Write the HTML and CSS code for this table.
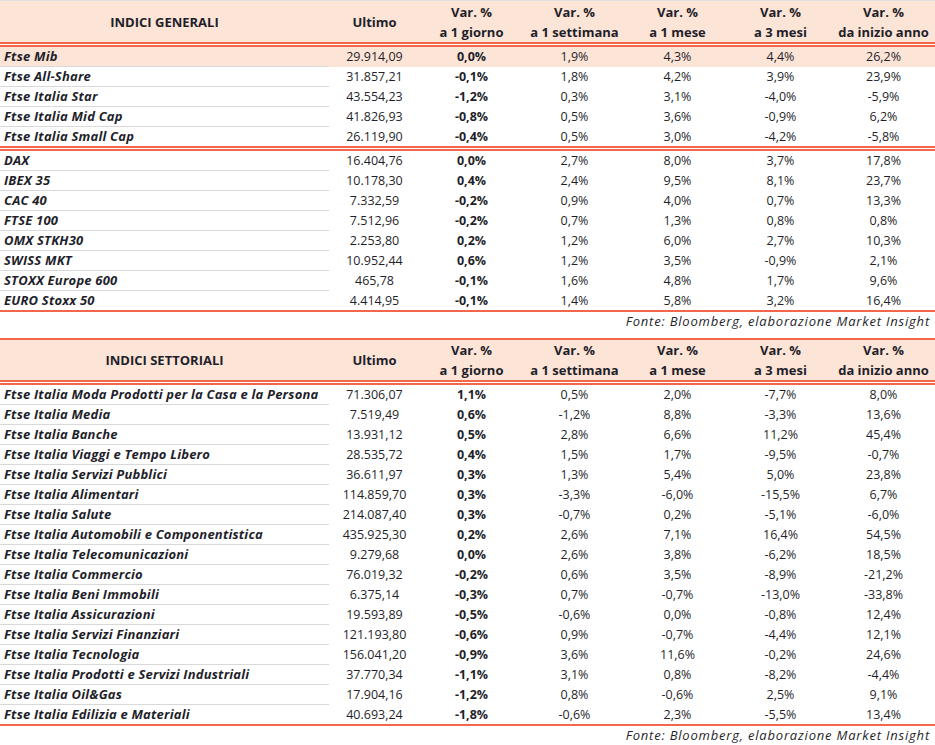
FILE: index.html
```html
<!DOCTYPE html>
<html lang="it">
<head>
<meta charset="utf-8">
<title>Indici</title>
<link rel="stylesheet" href="styles.css">
</head>
<body>
<div class="sheet">
  <div class="grid head head1">
    <div class="hname">INDICI GENERALI</div>
    <div>Ultimo</div>
    <div>Var. %<br>a 1 giorno</div>
    <div>Var. %<br>a 1 settimana</div>
    <div>Var. %<br>a 1 mese</div>
    <div>Var. %<br>a 3 mesi</div>
    <div>Var. %<br>da inizio anno</div>
  </div>
  <div class="dbl"></div>
  <div class="grid row hl"><div class="name">Ftse Mib</div><div>29.914,09</div><div class="d">0,0%</div><div>1,9%</div><div>4,3%</div><div>4,4%</div><div>26,2%</div></div>
  <div class="grid row"><div class="name">Ftse All-Share</div><div>31.857,21</div><div class="d">-0,1%</div><div>1,8%</div><div>4,2%</div><div>3,9%</div><div>23,9%</div></div>
  <div class="grid row"><div class="name">Ftse Italia Star</div><div>43.554,23</div><div class="d">-1,2%</div><div>0,3%</div><div>3,1%</div><div>-4,0%</div><div>-5,9%</div></div>
  <div class="grid row"><div class="name">Ftse Italia Mid Cap</div><div>41.826,93</div><div class="d">-0,8%</div><div>0,5%</div><div>3,6%</div><div>-0,9%</div><div>6,2%</div></div>
  <div class="grid row last"><div class="name">Ftse Italia Small Cap</div><div>26.119,90</div><div class="d">-0,4%</div><div>0,5%</div><div>3,0%</div><div>-4,2%</div><div>-5,8%</div></div>
  <div class="dbl"></div>
  <div class="grid row"><div class="name">DAX</div><div>16.404,76</div><div class="d">0,0%</div><div>2,7%</div><div>8,0%</div><div>3,7%</div><div>17,8%</div></div>
  <div class="grid row"><div class="name">IBEX 35</div><div>10.178,30</div><div class="d">0,4%</div><div>2,4%</div><div>9,5%</div><div>8,1%</div><div>23,7%</div></div>
  <div class="grid row"><div class="name">CAC 40</div><div>7.332,59</div><div class="d">-0,2%</div><div>0,9%</div><div>4,0%</div><div>0,7%</div><div>13,3%</div></div>
  <div class="grid row"><div class="name">FTSE 100</div><div>7.512,96</div><div class="d">-0,2%</div><div>0,7%</div><div>1,3%</div><div>0,8%</div><div>0,8%</div></div>
  <div class="grid row"><div class="name">OMX STKH30</div><div>2.253,80</div><div class="d">0,2%</div><div>1,2%</div><div>6,0%</div><div>2,7%</div><div>10,3%</div></div>
  <div class="grid row"><div class="name">SWISS MKT</div><div>10.952,44</div><div class="d">0,6%</div><div>1,2%</div><div>3,5%</div><div>-0,9%</div><div>2,1%</div></div>
  <div class="grid row"><div class="name">STOXX Europe 600</div><div>465,78</div><div class="d">-0,1%</div><div>1,6%</div><div>4,8%</div><div>1,7%</div><div>9,6%</div></div>
  <div class="grid row last"><div class="name">EURO Stoxx 50</div><div>4.414,95</div><div class="d">-0,1%</div><div>1,4%</div><div>5,8%</div><div>3,2%</div><div>16,4%</div></div>
  <div class="redline"></div>
  <div class="fonte">Fonte: Bloomberg, elaborazione Market Insight</div>
  <div class="redline"></div>

  <div class="grid head head2">
    <div class="hname">INDICI SETTORIALI</div>
    <div>Ultimo</div>
    <div>Var. %<br>a 1 giorno</div>
    <div>Var. %<br>a 1 settimana</div>
    <div>Var. %<br>a 1 mese</div>
    <div>Var. %<br>a 3 mesi</div>
    <div>Var. %<br>da inizio anno</div>
  </div>
  <div class="dbl"></div>
  <div class="grid row"><div class="name">Ftse Italia Moda Prodotti per la Casa e la Persona</div><div>71.306,07</div><div class="d">1,1%</div><div>0,5%</div><div>2,0%</div><div>-7,7%</div><div>8,0%</div></div>
  <div class="grid row"><div class="name">Ftse Italia Media</div><div>7.519,49</div><div class="d">0,6%</div><div>-1,2%</div><div>8,8%</div><div>-3,3%</div><div>13,6%</div></div>
  <div class="grid row"><div class="name">Ftse Italia Banche</div><div>13.931,12</div><div class="d">0,5%</div><div>2,8%</div><div>6,6%</div><div>11,2%</div><div>45,4%</div></div>
  <div class="grid row"><div class="name">Ftse Italia Viaggi e Tempo Libero</div><div>28.535,72</div><div class="d">0,4%</div><div>1,5%</div><div>1,7%</div><div>-9,5%</div><div>-0,7%</div></div>
  <div class="grid row"><div class="name">Ftse Italia Servizi Pubblici</div><div>36.611,97</div><div class="d">0,3%</div><div>1,3%</div><div>5,4%</div><div>5,0%</div><div>23,8%</div></div>
  <div class="grid row"><div class="name">Ftse Italia Alimentari</div><div>114.859,70</div><div class="d">0,3%</div><div>-3,3%</div><div>-6,0%</div><div>-15,5%</div><div>6,7%</div></div>
  <div class="grid row"><div class="name">Ftse Italia Salute</div><div>214.087,40</div><div class="d">0,3%</div><div>-0,7%</div><div>0,2%</div><div>-5,1%</div><div>-6,0%</div></div>
  <div class="grid row"><div class="name">Ftse Italia Automobili e Componentistica</div><div>435.925,30</div><div class="d">0,2%</div><div>2,6%</div><div>7,1%</div><div>16,4%</div><div>54,5%</div></div>
  <div class="grid row"><div class="name">Ftse Italia Telecomunicazioni</div><div>9.279,68</div><div class="d">0,0%</div><div>2,6%</div><div>3,8%</div><div>-6,2%</div><div>18,5%</div></div>
  <div class="grid row"><div class="name">Ftse Italia Commercio</div><div>76.019,32</div><div class="d">-0,2%</div><div>0,6%</div><div>3,5%</div><div>-8,9%</div><div>-21,2%</div></div>
  <div class="grid row"><div class="name">Ftse Italia Beni Immobili</div><div>6.375,14</div><div class="d">-0,3%</div><div>0,7%</div><div>-0,7%</div><div>-13,0%</div><div>-33,8%</div></div>
  <div class="grid row"><div class="name">Ftse Italia Assicurazioni</div><div>19.593,89</div><div class="d">-0,5%</div><div>-0,6%</div><div>0,0%</div><div>-0,8%</div><div>12,4%</div></div>
  <div class="grid row"><div class="name">Ftse Italia Servizi Finanziari</div><div>121.193,80</div><div class="d">-0,6%</div><div>0,9%</div><div>-0,7%</div><div>-4,4%</div><div>12,1%</div></div>
  <div class="grid row"><div class="name">Ftse Italia Tecnologia</div><div>156.041,20</div><div class="d">-0,9%</div><div>3,6%</div><div>11,6%</div><div>-0,2%</div><div>24,6%</div></div>
  <div class="grid row"><div class="name">Ftse Italia Prodotti e Servizi Industriali</div><div>37.770,34</div><div class="d">-1,1%</div><div>3,1%</div><div>0,8%</div><div>-8,2%</div><div>-4,4%</div></div>
  <div class="grid row"><div class="name">Ftse Italia Oil&amp;Gas</div><div>17.904,16</div><div class="d">-1,2%</div><div>0,8%</div><div>-0,6%</div><div>2,5%</div><div>9,1%</div></div>
  <div class="grid row last"><div class="name">Ftse Italia Edilizia e Materiali</div><div>40.693,24</div><div class="d">-1,8%</div><div>-0,6%</div><div>2,3%</div><div>-5,5%</div><div>13,4%</div></div>
  <div class="redline"></div>
  <div class="fonte">Fonte: Bloomberg, elaborazione Market Insight</div>
</div>
</body>
</html>
```

FILE: styles.css
```css
* { box-sizing: border-box; }

body {
  margin: 0;
  background: #ffffff;
  color: #1f1f2b;
  font-family: "Open Sans", Lato, sans-serif;
  font-size: 13px;
}

.sheet {
  width: 935px;
  border-top: 1px solid #e2e2e2;
}

.grid {
  display: grid;
  grid-template-columns: 329px 91px repeat(5, 103px);
}

.head {
  background: #fce4d6;
  font-weight: 700;
  line-height: 20px;
}

.head1 { height: 41px; }
.head2 { height: 40px; }

.head > div {
  display: flex;
  align-items: center;
  justify-content: center;
  text-align: center;
}

.dbl {
  height: 5px;
  border-top: 2px solid #f2664c;
  border-bottom: 2px solid #f2664c;
}

.redline {
  height: 2px;
  background: #f2664c;
}

.row {
  height: 20px;
  line-height: 19px;
}

.row > div {
  text-align: center;
  white-space: nowrap;
  font-size: 12.5px;
}

.row .name {
  text-align: left;
  padding-left: 4px;
  font-size: 13px;
  letter-spacing: 0.2px;
  font-weight: 700;
  font-style: italic;
  border-bottom: 1px solid #d9d9d9;
}

.row.last { height: 19px; }
.row.last .name { border-bottom: 0; }

.row .d { font-weight: 700; }

.hl { background: #fce4d6; }

.fonte {
  height: 26px;
  line-height: 19px;
  text-align: right;
  padding-right: 5px;
  font-style: italic;
  letter-spacing: 0.8px;
}
```
